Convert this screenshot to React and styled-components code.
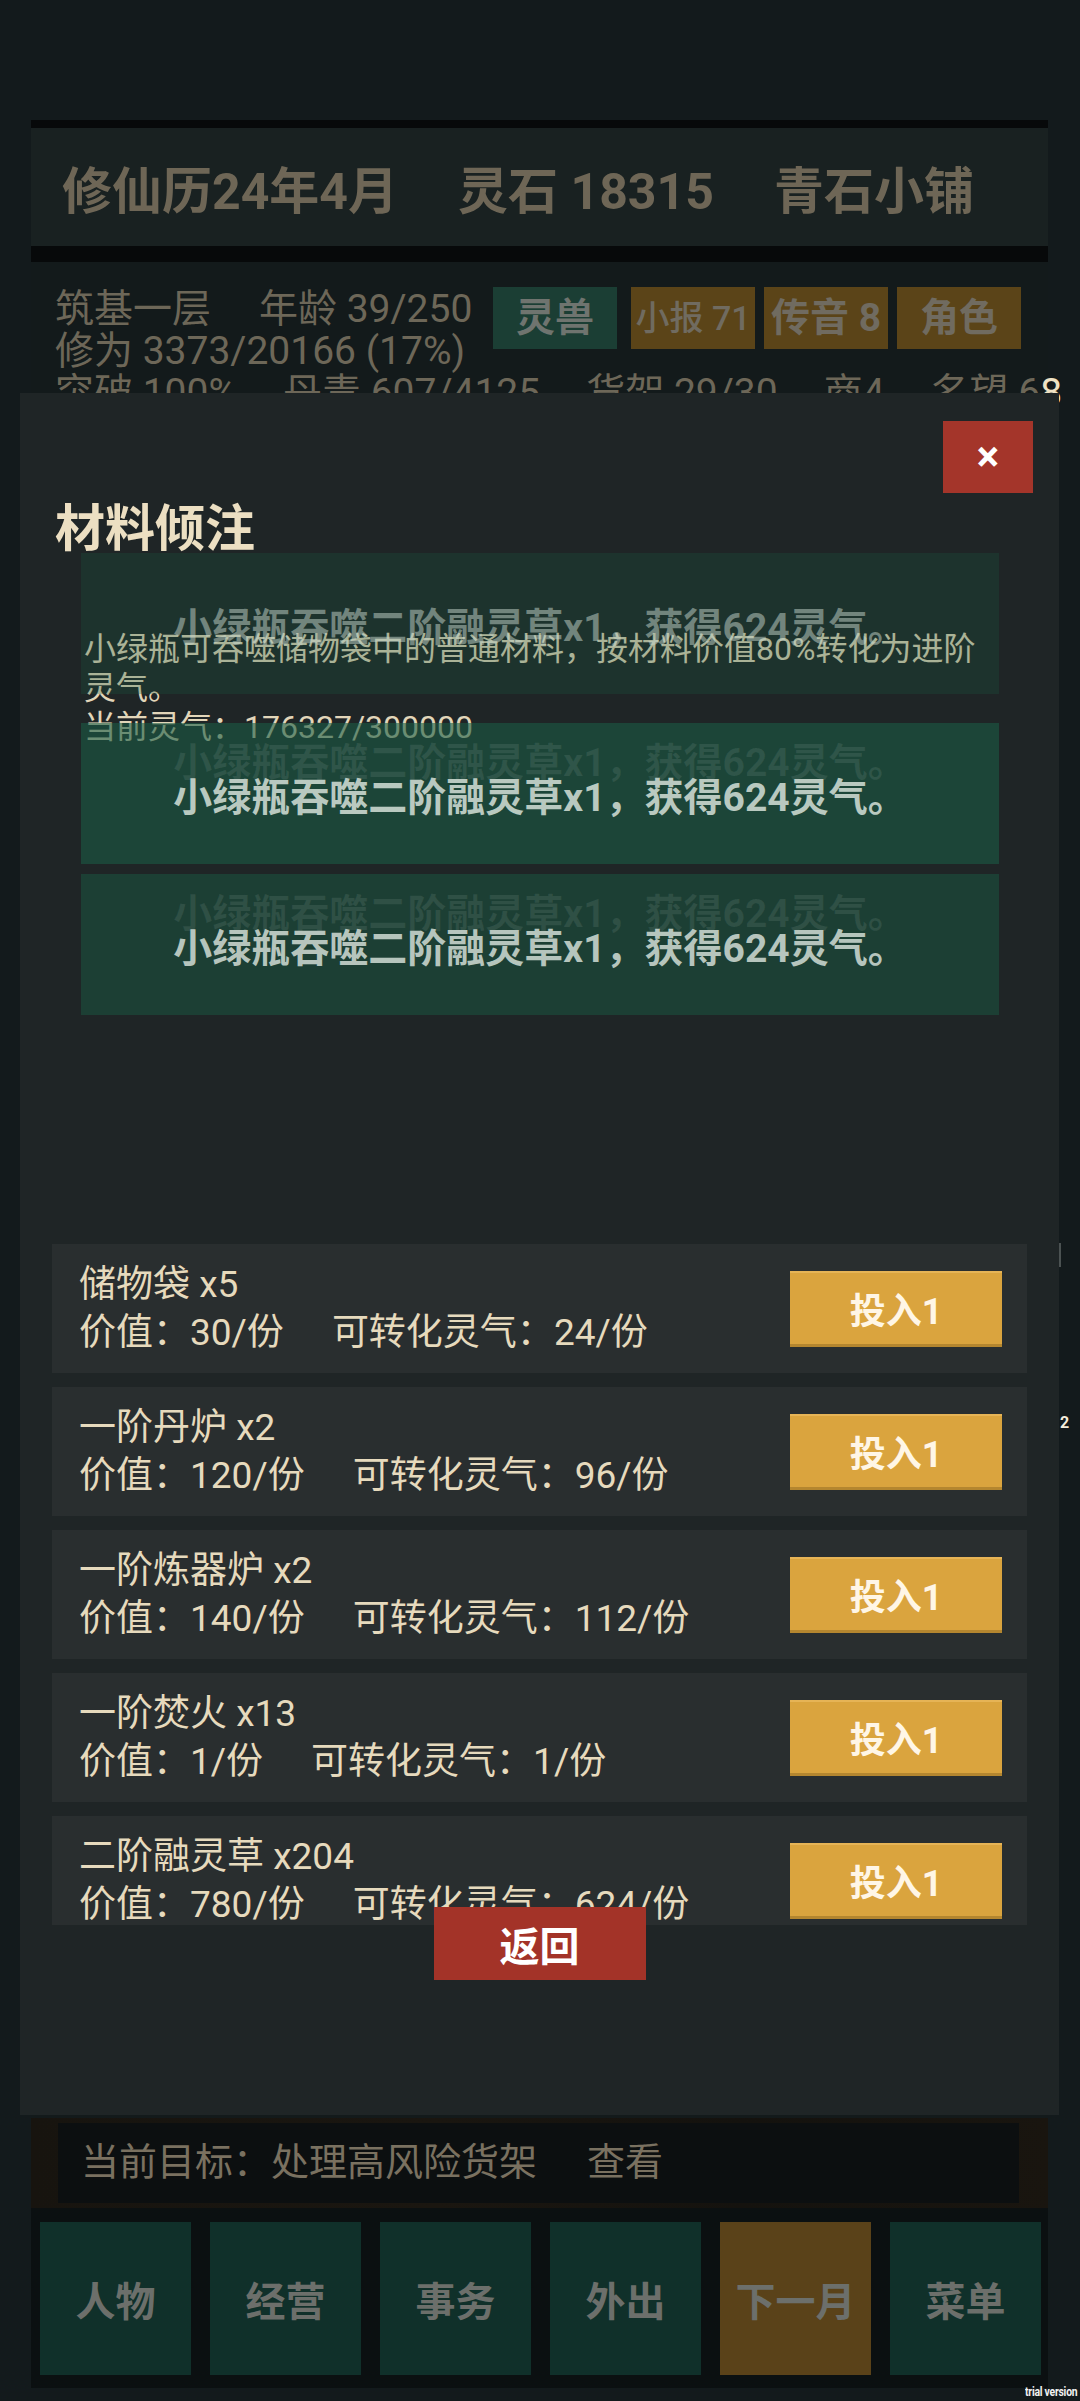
import React from "react";
import styled, { createGlobalStyle } from "styled-components";

const GlobalStyle = createGlobalStyle`
  html, body {
    margin: 0;
    padding: 0;
    background: #131a1c;
  }
  body {
    font-family: Roboto, "Noto Sans CJK SC", sans-serif;
  }
  * {
    box-sizing: border-box;
  }
`;

const colors = {
  page: "#131a1c",
  rule: "#07090a",
  header: "#192121",
  dimText: "#6e6656",
  modal: "#1f2526",
  card: "#292e2f",
  cream: "#e6dabd",
  gold: "#daa43e",
  red: "#a4352a",
  teal: "#10302a",
  brown: "#5a4219",
};

const Page = styled.div`
  position: relative;
  width: 1080px;
  height: 2401px;
  overflow: hidden;
  background: ${colors.page};
`;

const Game = styled.div`
  display: flex;
  flex-direction: column;
  height: 100%;
  padding: 120px 32px 13px 31px;
`;

const Rule = styled.div`
  height: ${(p) => p.$h}px;
  flex-shrink: 0;
  background: ${colors.rule};
`;

const Header = styled.div`
  height: 118px;
  flex-shrink: 0;
  display: flex;
  align-items: center;
  gap: 60px;
  padding-left: 31px;
  background: ${colors.header};
  color: ${colors.dimText};
  font-size: 50px;
  font-weight: 700;
  white-space: nowrap;
`;

const Status = styled.div`
  flex: 1;
  padding: 26px 27px 0 24px;
  background: #131a1b;
  color: #6d6758;
  font-size: 39px;
  line-height: 42px;
  white-space: nowrap;
`;

const StatusTop = styled.div`
  display: flex;
  justify-content: space-between;
  align-items: flex-start;
`;

const StatLine = styled.div`
  display: flex;
  gap: 48px;
`;

const StatItems = styled.div`
  display: flex;
  gap: 46px;
`;

const Bright = styled.span`
  color: #efe2c4;
`;

const TagGroup = styled.div`
  display: flex;
  gap: 9px;
  margin-top: -1px;
`;

const Tag = styled.div`
  width: 124px;
  height: 62px;
  display: flex;
  align-items: center;
  justify-content: center;
  background: ${(p) => (p.$teal ? "#1b3e34" : "#5b4418")};
  color: ${(p) => (p.$teal ? "#6f746f" : "#706b60")};
  font-size: ${(p) => (p.$small ? 34 : 39)}px;
  font-weight: ${(p) => (p.$small ? 500 : 700)};
  margin-right: ${(p) => (p.$teal ? 5 : 0)}px;
`;

const Goal = styled.div`
  height: 90px;
  flex-shrink: 0;
  padding: 5px 29px 5px 27px;
  background: linear-gradient(90deg, #17140f, #1a1610 40%, #14120e 70%, #19150f);
`;

const GoalInner = styled.div`
  height: 100%;
  display: flex;
  align-items: center;
  gap: 50px;
  padding: 0 0 10px 23px;
  background: #0c0f10;
  color: #7a7160;
  font-size: 38px;
`;

const Nav = styled.div`
  height: 180px;
  flex-shrink: 0;
  display: flex;
  gap: 19px;
  padding: 14px 7px 13px 9px;
  background: #0b1011;
`;

const NavButton = styled.div`
  flex: 1;
  display: flex;
  align-items: center;
  justify-content: center;
  background: ${(p) => (p.$active ? colors.brown : colors.teal)};
  color: #6c6f6b;
  font-size: 40px;
  font-weight: 700;
`;

/* ---------- modal ---------- */

const Modal = styled.div`
  position: absolute;
  top: 393px;
  left: 20px;
  width: 1039px;
  height: 1722px;
  display: flex;
  flex-direction: column;
  background: ${colors.modal};
  z-index: 5;
`;

const CloseRow = styled.div`
  display: flex;
  justify-content: flex-end;
  padding: 28px 26px 0 0;
`;

const CloseButton = styled.div`
  width: 90px;
  height: 72px;
  display: flex;
  align-items: center;
  justify-content: center;
  background: ${colors.red};
  color: #fff;
  font-size: 42px;
  font-weight: 700;
  line-height: 1;
`;

const Title = styled.div`
  margin-top: 6px;
  padding-left: 35px;
  font-size: 50px;
  line-height: 60px;
  font-weight: 700;
  color: #ecdfc2;
`;

const Desc = styled.div`
  margin: 71px 64px 0;
  font-size: 32px;
  line-height: 39px;
  color: #e2d6b9;
`;

const ToastLayer = styled.div`
  position: absolute;
  top: 160px;
  left: 61px;
  width: 918px;
  height: 460px;
  z-index: 2;
`;

const toastTones = {
  fade: { bg: "rgba(26, 90, 66, 0.28)", text: "rgba(200, 215, 206, 0.5)", ghost: "transparent" },
  hot: { bg: "rgba(26, 92, 68, 0.6)", text: "#b9c9c0", ghost: "rgba(185, 201, 192, 0.12)" },
  warm: { bg: "rgba(26, 92, 68, 0.48)", text: "#b6c5bd", ghost: "rgba(185, 201, 192, 0.12)" },
};

const Toast = styled.div`
  position: absolute;
  left: 0;
  top: ${(p) => p.$top}px;
  width: 100%;
  height: 141px;
  display: flex;
  align-items: center;
  justify-content: center;
  background: ${(p) => toastTones[p.$tone].bg};
  font-size: 39px;
  font-weight: 700;
  white-space: nowrap;
`;

const ToastText = styled.div`
  position: relative;
  color: ${(p) => toastTones[p.$tone].text};
`;

const ToastGhost = styled.div`
  position: absolute;
  left: 0;
  top: -35px;
  color: ${(p) => toastTones[p.$tone].ghost};
`;

const List = styled.div`
  flex-shrink: 0;
  height: 681px;
  margin: 497px 32px 0;
  display: flex;
  flex-direction: column;
  gap: 14px;
  overflow: hidden;
`;

const Card = styled.div`
  flex-shrink: 0;
  height: 129px;
  display: flex;
  align-items: center;
  justify-content: space-between;
  padding: 0 25px 0 27px;
  background: ${colors.card};
`;

const CardText = styled.div`
  font-size: 37px;
  line-height: 48px;
  color: ${colors.cream};
  white-space: nowrap;
`;

const Worth = styled.span`
  margin-right: 48px;
`;

const InvestButton = styled.div`
  width: 212px;
  height: 76px;
  display: flex;
  align-items: center;
  justify-content: center;
  background: ${colors.gold};
  border-top: 2px solid #e6b456;
  border-bottom: 3px solid #b4862f;
  color: #fff6e6;
  font-size: 36px;
  font-weight: 700;
`;

const BackButton = styled.div`
  position: relative;
  z-index: 1;
  width: 212px;
  height: 73px;
  margin: -18px auto 0;
  display: flex;
  align-items: center;
  justify-content: center;
  background: #a33328;
  color: #fff;
  font-size: 40px;
  font-weight: 700;
`;

/* stray bits peeking past the overlay */

const Stray = styled.div`
  position: absolute;
  left: ${(p) => p.$x}px;
  top: ${(p) => p.$y}px;
  color: #f4ecdc;
  font-size: 16px;
  font-weight: 700;
  line-height: 1;
`;

const ScrollMark = styled.div`
  position: absolute;
  left: 1059px;
  top: 1243px;
  width: 2px;
  height: 24px;
  background: #4b5252;
`;

const Watermark = styled.div`
  position: absolute;
  right: 3px;
  top: 2385px;
  color: #f2f2f2;
  font-size: 13px;
  font-weight: 700;
  letter-spacing: -0.3px;
  line-height: 1;
  transform: scaleX(0.8);
  transform-origin: right center;
  white-space: nowrap;
`;

const materials = [
  { name: "储物袋", count: 5, value: 30, qi: 24 },
  { name: "一阶丹炉", count: 2, value: 120, qi: 96 },
  { name: "一阶炼器炉", count: 2, value: 140, qi: 112 },
  { name: "一阶焚火", count: 13, value: 1, qi: 1 },
  { name: "二阶融灵草", count: 204, value: 780, qi: 624 },
];

const toastMsg = "小绿瓶吞噬二阶融灵草x1，获得624灵气。";

const toasts = [
  { tone: "fade", top: 0 },
  { tone: "hot", top: 170 },
  { tone: "warm", top: 321 },
];

const navItems = ["人物", "经营", "事务", "外出", "下一月", "菜单"];

export default function App() {
  return (
    <>
      <GlobalStyle />
      <Page>
        <Game>
          <Rule $h={8} />
          <Header>
            <span>修仙历24年4月</span>
            <span>灵石 18315</span>
            <span>青石小铺</span>
          </Header>
          <Rule $h={16} />
          <Status>
            <StatusTop>
              <div>
                <StatLine>
                  <span>筑基一层</span>
                  <span>年龄 39/250</span>
                </StatLine>
                <div>修为 3373/20166 (17%)</div>
              </div>
              <TagGroup>
                <Tag $teal>灵兽</Tag>
                <Tag $small>小报 71</Tag>
                <Tag>传音 8</Tag>
                <Tag>角色</Tag>
              </TagGroup>
            </StatusTop>
            <StatItems>
              <span>突破 100%</span>
              <span>丹毒 607/4125</span>
              <span>货架 29/30</span>
              <span>商4</span>
              <span>
                名望 6<Bright>8</Bright>
              </span>
            </StatItems>
          </Status>
          <Goal>
            <GoalInner>
              <span>当前目标：处理高风险货架</span>
              <span>查看</span>
            </GoalInner>
          </Goal>
          <Nav>
            {navItems.map((label) => (
              <NavButton key={label} $active={label === "下一月"}>
                {label}
              </NavButton>
            ))}
          </Nav>
        </Game>

        <Modal>
          <CloseRow>
            <CloseButton>×</CloseButton>
          </CloseRow>
          <Title>材料倾注</Title>
          <Desc>
            小绿瓶可吞噬储物袋中的普通材料，按材料价值80%转化为进阶灵气。
            <br />
            当前灵气：176327/300000
          </Desc>

          <ToastLayer>
            {toasts.map((t, i) => (
              <Toast key={i} $tone={t.tone} $top={t.top}>
                <ToastText $tone={t.tone}>
                  {toastMsg}
                  <ToastGhost $tone={t.tone}>{toastMsg}</ToastGhost>
                </ToastText>
              </Toast>
            ))}
          </ToastLayer>

          <List>
            {materials.map((m) => (
              <Card key={m.name}>
                <CardText>
                  <div>
                    {m.name} x{m.count}
                  </div>
                  <div>
                    <Worth>价值：{m.value}/份</Worth>
                    可转化灵气：{m.qi}/份
                  </div>
                </CardText>
                <InvestButton>投入1</InvestButton>
              </Card>
            ))}
          </List>
          <BackButton>返回</BackButton>
        </Modal>

        <ScrollMark />
        <Stray $x={1060} $y={1415}>2</Stray>
        <Watermark>trial version</Watermark>
      </Page>
    </>
  );
}
